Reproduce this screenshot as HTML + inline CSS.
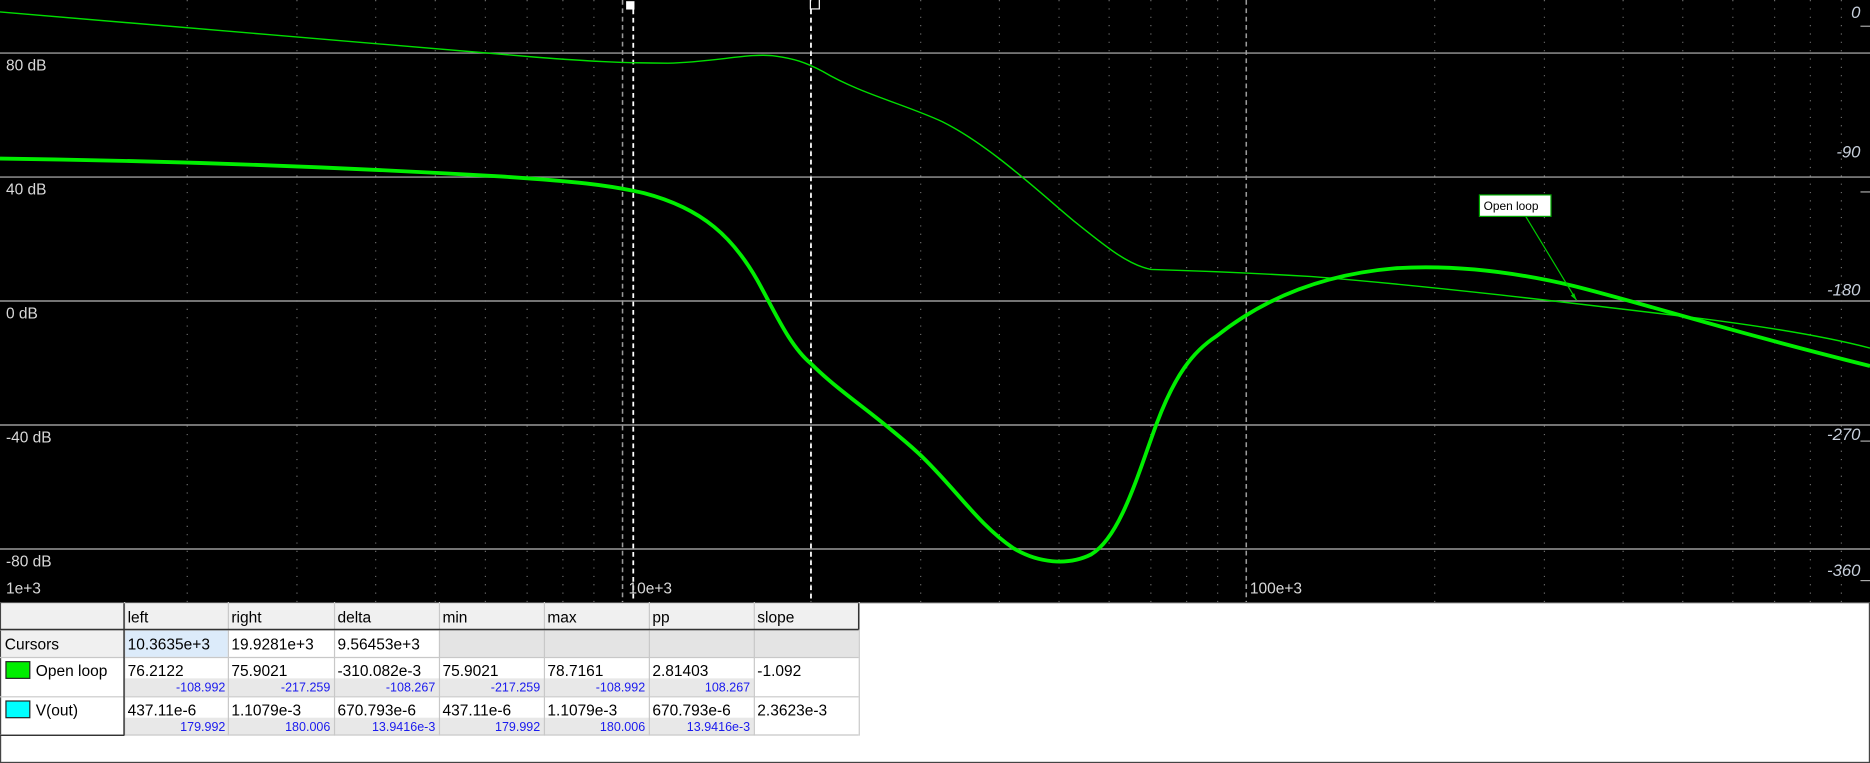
<!DOCTYPE html>
<html><head><meta charset="utf-8"><style>
html,body{margin:0;padding:0;background:#fff;overflow:hidden}
svg{display:block}
text{font-family:"Liberation Sans",sans-serif}
</style></head><body>
<svg width="1870" height="763" viewBox="0 0 1568 640" preserveAspectRatio="none" xmlns="http://www.w3.org/2000/svg">
<rect x="0" y="0" width="1568" height="505" fill="#000"/>
<g stroke="#6a6a6a" stroke-width="1" stroke-dasharray="1 6">
<line x1="157" y1="0" x2="157" y2="505"/><line x1="249" y1="0" x2="249" y2="505"/><line x1="315" y1="0" x2="315" y2="505"/><line x1="365" y1="0" x2="365" y2="505"/><line x1="407" y1="0" x2="407" y2="505"/><line x1="442" y1="0" x2="442" y2="505"/><line x1="472" y1="0" x2="472" y2="505"/><line x1="498" y1="0" x2="498" y2="505"/>
<line x1="680" y1="0" x2="680" y2="505"/><line x1="772" y1="0" x2="772" y2="505"/><line x1="838" y1="0" x2="838" y2="505"/><line x1="888" y1="0" x2="888" y2="505"/><line x1="930" y1="0" x2="930" y2="505"/><line x1="965" y1="0" x2="965" y2="505"/><line x1="995" y1="0" x2="995" y2="505"/><line x1="1021" y1="0" x2="1021" y2="505"/>
<line x1="1203" y1="0" x2="1203" y2="505"/><line x1="1295" y1="0" x2="1295" y2="505"/><line x1="1361" y1="0" x2="1361" y2="505"/><line x1="1411" y1="0" x2="1411" y2="505"/><line x1="1453" y1="0" x2="1453" y2="505"/><line x1="1488" y1="0" x2="1488" y2="505"/><line x1="1518" y1="0" x2="1518" y2="505"/><line x1="1544" y1="0" x2="1544" y2="505"/>
</g>
<g stroke="#9a9a9a" stroke-width="1.3" stroke-dasharray="4 3">
<line x1="522" y1="0" x2="522" y2="505"/><line x1="1045" y1="0" x2="1045" y2="505"/>
</g>
<g stroke="#9a9a9a" stroke-width="1.2">
<line x1="0" y1="44.5" x2="1568" y2="44.5"/><line x1="0" y1="148.5" x2="1568" y2="148.5"/><line x1="0" y1="252.5" x2="1568" y2="252.5"/><line x1="0" y1="356.5" x2="1568" y2="356.5"/><line x1="0" y1="460.5" x2="1568" y2="460.5"/>
</g>
<g stroke="#fff" stroke-width="1.5" stroke-dasharray="4 3">
<line x1="531" y1="8" x2="531" y2="505"/><line x1="680" y1="8" x2="680" y2="505"/>
</g>
<rect x="525" y="1" width="7" height="7" fill="#fff"/>
<path d="M679.5 0V7.5H687V0" fill="none" stroke="#fff" stroke-width="1"/>
<g fill="#d8d8d8" font-size="13">
<text x="5" y="59">80 dB</text><text x="5" y="163">40 dB</text><text x="5" y="267">0 dB</text><text x="5" y="371">-40 dB</text><text x="5" y="475">-80 dB</text>
<text x="5" y="498">1e+3</text><text x="527" y="498">10e+3</text><text x="1048" y="498">100e+3</text>
</g>
<g fill="#c8d0dc" font-size="14" font-style="italic" text-anchor="end">
<text x="1560" y="15">0</text><text x="1560" y="132">-90</text><text x="1560" y="248">-180</text><text x="1560" y="369">-270</text><text x="1560" y="483">-360</text>
</g>
<g stroke="#aaa" stroke-width="1"><line x1="1560" y1="22" x2="1568" y2="22"/><line x1="1560" y1="161" x2="1568" y2="161"/><line x1="1560" y1="370" x2="1568" y2="370"/><line x1="1560" y1="487" x2="1568" y2="487"/></g>
<path d="M0 10 C150 22 300 36 450 48 C490 51 520 53 560 53 C600 52 630 44 650 47 C665 49 675 52 690 60 C720 78 760 88 790 102 C830 122 870 160 900 185 C925 205 945 222 965 226 C1000 227 1050 229 1100 232 C1200 240 1300 252 1425 267 C1480 274 1530 282 1568 292" fill="none" stroke="#00dd00" stroke-width="1.2"/>
<path d="M0 133 C150 135 300 141 420 148 C480 152 510 155 540 162 C590 175 615 200 635 235 C650 262 662 290 680 305 C705 330 735 348 770 380 C800 408 820 440 850 460 C870 472 895 475 915 465 C940 450 955 395 970 355 C985 315 1000 295 1020 282 C1060 250 1110 230 1170 225 C1220 222 1270 228 1320 240 C1380 255 1440 275 1568 307" fill="none" stroke="#00ee00" stroke-width="3.2"/>
<line x1="1279" y1="181" x2="1322" y2="252" stroke="#00cc00" stroke-width="1"/>
<path d="M1322 252 l-5 -4 l3 -2 z" fill="#00cc00"/>
<rect x="1240.5" y="163.5" width="60" height="18" fill="#fff" stroke="#00aa00"/>
<text x="1244" y="176" font-size="10" fill="#000">Open loop</text>
<rect x="0" y="505" width="1568" height="135" fill="#fff"/>
<rect x="0.5" y="505.5" width="1567" height="134" fill="none" stroke="#444"/>
<rect x="1" y="506" width="719" height="22" fill="#f0f0f0"/>
<rect x="1" y="528" width="103" height="23" fill="#f0f0f0"/>
<rect x="104" y="528" width="87" height="23" fill="#dcebfa"/>
<rect x="368" y="528" width="352" height="23" fill="#e4e4e4"/>
<rect x="104" y="569" width="528" height="15" fill="#e8e8e8"/>
<rect x="104" y="602" width="528" height="14" fill="#e8e8e8"/>
<g stroke="#c8c8c8" stroke-width="1">
<line x1="104.5" y1="505" x2="104.5" y2="617"/><line x1="191.5" y1="505" x2="191.5" y2="617"/><line x1="280.5" y1="505" x2="280.5" y2="617"/><line x1="368.5" y1="505" x2="368.5" y2="617"/><line x1="456.5" y1="505" x2="456.5" y2="617"/><line x1="544.5" y1="505" x2="544.5" y2="617"/><line x1="632.5" y1="505" x2="632.5" y2="617"/><line x1="720.5" y1="505" x2="720.5" y2="617"/>
<line x1="0" y1="528.5" x2="720" y2="528.5"/><line x1="0" y1="551.5" x2="720" y2="551.5"/><line x1="0" y1="584.5" x2="720" y2="584.5"/><line x1="0" y1="616.5" x2="720" y2="616.5"/>
</g>
<g stroke="#333" stroke-width="1.2"><line x1="104" y1="506" x2="104" y2="617"/><line x1="0" y1="616.8" x2="104" y2="616.8"/><line x1="720" y1="506" x2="720" y2="528"/><line x1="0" y1="528" x2="720" y2="528"/></g>
<rect x="5" y="555" width="20" height="14" fill="#00ee00" stroke="#222"/>
<rect x="5" y="588" width="20" height="14" fill="#00ffff" stroke="#222"/>
<g font-size="13" fill="#000">
<text x="107" y="522">left</text><text x="194" y="522">right</text><text x="283" y="522">delta</text><text x="371" y="522">min</text><text x="459" y="522">max</text><text x="547" y="522">pp</text><text x="635" y="522">slope</text>
<text x="4" y="545">Cursors</text><text x="107" y="545">10.3635e+3</text><text x="194" y="545">19.9281e+3</text><text x="283" y="545">9.56453e+3</text>
<text x="30" y="567">Open loop</text><text x="107" y="567">76.2122</text><text x="194" y="567">75.9021</text><text x="283" y="567">-310.082e-3</text><text x="371" y="567">75.9021</text><text x="459" y="567">78.7161</text><text x="547" y="567">2.81403</text><text x="635" y="567">-1.092</text>
<text x="30" y="600">V(out)</text><text x="107" y="600">437.11e-6</text><text x="194" y="600">1.1079e-3</text><text x="283" y="600">670.793e-6</text><text x="371" y="600">437.11e-6</text><text x="459" y="600">1.1079e-3</text><text x="547" y="600">670.793e-6</text><text x="635" y="600">2.3623e-3</text>
</g>
<g font-size="10.5" fill="#1a1aee" text-anchor="end">
<text x="189" y="580">-108.992</text><text x="277" y="580">-217.259</text><text x="365" y="580">-108.267</text><text x="453" y="580">-217.259</text><text x="541" y="580">-108.992</text><text x="629" y="580">108.267</text>
<text x="189" y="613">179.992</text><text x="277" y="613">180.006</text><text x="365" y="613">13.9416e-3</text><text x="453" y="613">179.992</text><text x="541" y="613">180.006</text><text x="629" y="613">13.9416e-3</text>
</g>
</svg>
</body></html>
